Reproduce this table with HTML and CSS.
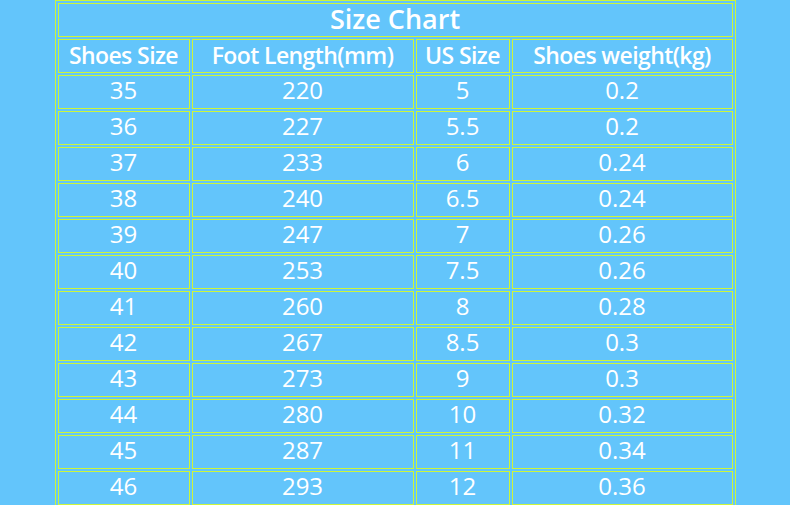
FILE: index.html
```html
<!DOCTYPE html>
<html>
<head>
<meta charset="utf-8">
<link rel="stylesheet" href="styles.css">
</head>
<body>
<table class="chart">
  <colgroup>
    <col class="c1"><col class="c2"><col class="c3"><col class="c4">
  </colgroup>
  <tr><td class="title" colspan="4">Size Chart</td></tr>
  <tr class="head"><td>Shoes Size</td><td>Foot Length(mm)</td><td>US Size</td><td>Shoes weight(kg)</td></tr>
  <tr><td>35</td><td>220</td><td>5</td><td>0.2</td></tr>
  <tr><td>36</td><td>227</td><td>5.5</td><td>0.2</td></tr>
  <tr><td>37</td><td>233</td><td>6</td><td>0.24</td></tr>
  <tr><td>38</td><td>240</td><td>6.5</td><td>0.24</td></tr>
  <tr><td>39</td><td>247</td><td>7</td><td>0.26</td></tr>
  <tr><td>40</td><td>253</td><td>7.5</td><td>0.26</td></tr>
  <tr><td>41</td><td>260</td><td>8</td><td>0.28</td></tr>
  <tr><td>42</td><td>267</td><td>8.5</td><td>0.3</td></tr>
  <tr><td>43</td><td>273</td><td>9</td><td>0.3</td></tr>
  <tr><td>44</td><td>280</td><td>10</td><td>0.32</td></tr>
  <tr><td>45</td><td>287</td><td>11</td><td>0.34</td></tr>
  <tr><td>46</td><td>293</td><td>12</td><td>0.36</td></tr>
</table>
</body>
</html>
```
FILE: styles.css
```css
html, body {
  margin: 0;
  padding: 0;
  background: #63c5fb;
  overflow: hidden;
}
.chart {
  margin: 0 auto;
  border-collapse: separate;
  border-spacing: 2px;
  border: 1px solid #cdf53a;
  table-layout: fixed;
  width: 680px;
  font-family: "Open Sans", "Noto Sans", sans-serif;
  color: #ffffff;
}
.c1 { width: 132px; }
.c2 { width: 222px; }
.c3 { width: 94px; }
.c4 { width: 221px; }
.chart td {
  border: 1px solid #cdf53a;
  height: 34px;
  box-sizing: border-box;
  padding: 0 0 4px 0;
  text-align: center;
  vertical-align: middle;
  font-size: 24px;
  line-height: 1;
  white-space: nowrap;
}
.chart td.title {
  font-size: 27px;
  font-weight: 600;
}
.head td {
  font-size: 23px;
  font-weight: 600;
  letter-spacing: -0.6px;
  padding-bottom: 2px;
}
```
